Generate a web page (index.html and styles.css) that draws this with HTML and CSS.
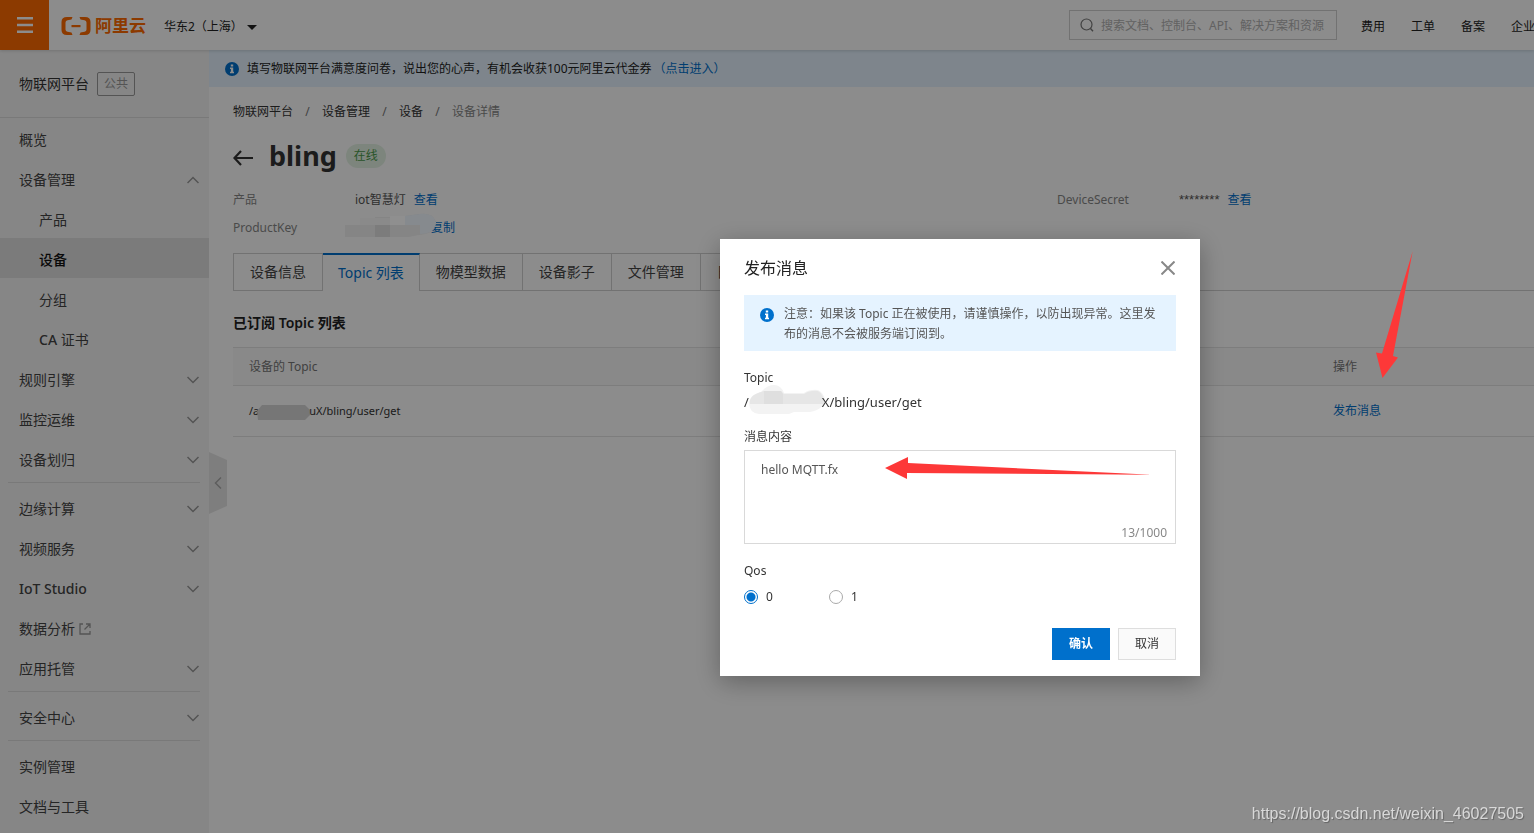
FILE: index.html
```html
<!DOCTYPE html>
<html lang="zh-CN">
<head>
<meta charset="utf-8">
<title>物联网平台 - 设备详情</title>
<link rel="stylesheet" href="styles.css">
</head>
<body>
<div class="app">
  <header class="topbar">
    <button class="menu-btn" aria-label="菜单"><svg width="16" height="16" viewBox="0 0 16 16"><path d="M0 0h16v2.500H0zM0 6.700h16v2.500H0zM0 13.500h16V16H0z" fill="#fff"/></svg></button>
    <a class="logo" href="#"><svg width="30" height="20" viewBox="0 0 30 20"><path d="M11.500 1H6Q.500 1 .500 6v8q0 5 5.500 5h5.500l-1-2.500-4-.8q-2-.4-2-2.200V6.500q0-1.800 2-2.200l4-.8zM18.500 1H24q5.500 0 5.500 5v8q0 5-5.500 5h-5.500l1-2.500 4-.8q2-.4 2-2.200V6.500q0-1.800-2-2.200l-4-.8z" fill="#ff6a00"/><path d="M10.500 9h9v2.200h-9z" fill="#ff6a00"/></svg><span>阿里云</span></a>
    <button class="region">华东2（上海）<i class="caret"></i></button>
    <label class="search"><svg width="14" height="14" viewBox="0 0 14 14"><circle cx="6.500" cy="6.500" r="5.500" fill="none" stroke="#777" stroke-width="1.200"/><path d="M10.500 10.500l2.500 2.800" stroke="#777" stroke-width="1.400"/></svg><input type="text" aria-label="搜索" placeholder="搜索文档、控制台、API、解决方案和资源"></label>
    <nav class="topnav"><a href="#">费用</a><a href="#">工单</a><a href="#">备案</a><a href="#">企业</a></nav>
  </header>
  <div class="body">
    <aside class="sidebar">
      <div class="side-head">物联网平台<span class="badge">公共</span></div>
      <nav class="side-nav">
        <a href="#">概览</a>
        <a href="#">设备管理<svg class="chev" viewBox="0 0 12 8"><path d="M.5 7L6 1.500 11.500 7"/></svg></a>
        <a href="#" class="sub">产品</a>
        <a href="#" class="sub active">设备</a>
        <a href="#" class="sub">分组</a>
        <a href="#" class="sub"><span><b>CA</b> 证书</span></a>
        <a href="#">规则引擎<svg class="chev" viewBox="0 0 12 8"><path d="M.5 1L6 6.500 11.500 1"/></svg></a>
        <a href="#">监控运维<svg class="chev" viewBox="0 0 12 8"><path d="M.5 1L6 6.500 11.500 1"/></svg></a>
        <a href="#">设备划归<svg class="chev" viewBox="0 0 12 8"><path d="M.5 1L6 6.500 11.500 1"/></svg></a>
        <hr>
        <a href="#">边缘计算<svg class="chev" viewBox="0 0 12 8"><path d="M.5 1L6 6.500 11.500 1"/></svg></a>
        <a href="#">视频服务<svg class="chev" viewBox="0 0 12 8"><path d="M.5 1L6 6.500 11.500 1"/></svg></a>
        <a href="#"><b>IoT Studio</b><svg class="chev" viewBox="0 0 12 8"><path d="M.5 1L6 6.500 11.500 1"/></svg></a>
        <a href="#">数据分析<svg class="ext" viewBox="0 0 12 12"><path d="M4 1H1v10h10V8M7 1h4v4M11 1L5.500 6.500"/></svg></a>
        <a href="#">应用托管<svg class="chev" viewBox="0 0 12 8"><path d="M.5 1L6 6.500 11.500 1"/></svg></a>
        <hr>
        <a href="#">安全中心<svg class="chev" viewBox="0 0 12 8"><path d="M.5 1L6 6.500 11.500 1"/></svg></a>
        <hr>
        <a href="#">实例管理</a>
        <a href="#">文档与工具</a>
      </nav>
      <button class="collapse" aria-label="收起"><svg width="8" height="12" viewBox="0 0 8 12"><path d="M7 .5L1.500 6 7 11.500" fill="none" stroke="#aaa" stroke-width="1.500"/></svg></button>
    </aside>
    <main class="main">
      <div class="banner"><svg class="info" viewBox="0 0 14 14"><circle cx="7" cy="7" r="7" fill="#0070cc"/><path d="M5.800 2.500h2.400v2H5.800zM5 5.500h3.200v4.300H9v1.400H5V9.800h.9V6.900H5z" fill="#fff"/></svg><span>填写物联网平台满意度问卷，说出您的心声，有机会收获100元阿里云代金券</span><a href="#">（点击进入）</a></div>
      <div class="content">
        <nav class="crumbs"><a href="#">物联网平台</a><i>/</i><a href="#">设备管理</a><i>/</i><a href="#">设备</a><i>/</i><span>设备详情</span></nav>
        <div class="title-row">
          <button class="back" aria-label="返回"><svg width="20" height="16" viewBox="0 0 20 16"><path d="M8 1L1.500 8 8 15M1.500 8H20" fill="none" stroke="#333" stroke-width="2.200"/></svg></button>
          <h1>bling</h1><span class="status">在线</span>
        </div>
        <dl class="props">
          <dt>产品</dt><dd>iot智慧灯<a href="#">查看</a></dd>
          <dt>DeviceSecret</dt><dd><span class="secret">********</span><a href="#">查看</a></dd>
          <dt>ProductKey</dt><dd class="key"><a href="#">复制</a></dd>
        </dl>
        <div class="tabs" role="tablist">
          <button role="tab">设备信息</button><button role="tab" class="on">Topic 列表</button><button role="tab">物模型数据</button><button role="tab">设备影子</button><button role="tab">文件管理</button><button role="tab">日志服务</button>
        </div>
        <h2>已订阅 Topic 列表</h2>
        <table class="topics">
          <thead><tr><th>设备的 Topic</th><th class="op">操作</th></tr></thead>
          <tbody><tr><td class="path">/a<svg class="mask-row" viewBox="0 0 54 15"><path d="M1 6L6 0h43l5 5v5l-5 5H2z" fill="#d8d8d8"/></svg>uX/bling/user/get</td><td><a href="#">发布消息</a></td></tr></tbody>
        </table>
      </div>
    </main>
  </div>
</div>
<div class="overlay">
  <svg class="mask-key" viewBox="0 0 92 26"><path d="M0 12h15V6h15V4h15V3h15L74 1q14-2 17 8-1 12-17 13l-10 2H0z" fill="#858585"/><path d="M15 5h30v7H15z" fill="#8a8a8a"/><path d="M45 3h15v9H45z" fill="#8f8f8f"/><path d="M30 12h15v12H30z" fill="#7c7c7c"/><path d="M60 3L74 1q14-2 17 8-1 12-16 12V12H60z" fill="#868a8e"/></svg>
  <form class="modal" role="dialog" aria-labelledby="dlg">
    <div class="modal-head"><h3 id="dlg">发布消息</h3><button type="button" class="close" aria-label="关闭"><svg width="14" height="14" viewBox="0 0 14 14"><path d="M.5 .5l13 13M13.500 .5l-13 13" stroke="#888" stroke-width="2"/></svg></button></div>
    <div class="notice"><svg class="info" viewBox="0 0 14 14"><circle cx="7" cy="7" r="7" fill="#0070cc"/><path d="M5.800 2.500h2.400v2H5.800zM5 5.500h3.200v4.300H9v1.400H5V9.800h.9V6.900H5z" fill="#fff"/></svg><p>注意：如果该 Topic 正在被使用，请谨慎操作，以防出现异常。这里发布的消息不会被服务端订阅到。</p></div>
    <div class="field-label">Topic</div>
    <div class="topic">/<svg class="mask-topic" viewBox="0 0 76 32"><path d="M0 19q2-8 12-10Q18 2 25 2t10 8l20 0q6-4 14-3 6 3 7 10-1 9-15 12l-16 0-5 2H10Q0 30 0 19z" fill="#f3f3f3"/><path d="M1 21V17q2-6 14-9h17l3 3h20q6-4 14-3 6 3 6 13z" fill="#e6e6e6"/><path d="M15 8h17l2 3v10H15z" fill="#dfdfdf"/></svg>X/bling/user/get</div>
    <label class="field-label msg-label" for="msg">消息内容</label>
    <div class="area"><textarea id="msg">hello MQTT.fx</textarea><span class="count">13/1000</span></div>
    <div class="field-label">Qos</div>
    <div class="radios"><label><input type="radio" name="qos" checked>0</label><label><input type="radio" name="qos">1</label></div>
    <div class="actions"><button type="button" class="btn primary">确认</button><button type="button" class="btn">取消</button></div>
    <svg class="arrow-msg" viewBox="0 0 267 22"><path d="M0 11L23 0V6L267 17.700 22 16V22z" fill="#fd3838"/></svg>
  </form>
  <svg class="arrow-op" viewBox="0 0 37 127"><path d="M36.700 0L17 105l5 1.500L6.500 127 0 101.500l6 1z" fill="#fd3838"/></svg>
  <div class="watermark">https://blog.csdn.net/weixin_46027505</div>
</div>
</body>
</html>
```
FILE: styles.css
```css
* { box-sizing: border-box; }
body { margin: 0; color: #333; background: #fff; font: 12px/20px "Noto Sans", "Noto Sans CJK SC", sans-serif; overflow: hidden; }
button, input, textarea { font: inherit; color: inherit; border: 0; background: none; padding: 0; margin: 0; }
a { color: #0070cc; text-decoration: none; }
i { font-style: normal; }
svg { display: block; flex: none; }
.app { min-height: 100vh; display: flex; flex-direction: column; }

.topbar { display: flex; align-items: center; height: 50px; box-shadow: 0 1px 3px rgba(0,0,0,.15); position: relative; z-index: 1; color: #222; }
.menu-btn { width: 49px; height: 50px; background: #ff6a00; display: grid; place-items: center; }
.logo { display: flex; align-items: center; gap: 4px; margin-left: 12px; padding-top: 2px; color: #ff6a00; font-size: 17px; font-weight: 700; }
.region { display: flex; align-items: center; gap: 4px; margin-left: 18px; padding-top: 4px; white-space: nowrap; }
.caret { border: 5px solid transparent; border-top-color: #222; border-bottom: 0; }
.search { display: flex; align-items: center; gap: 7px; width: 268px; height: 30px; margin-left: auto; padding: 0 10px; border: 1px solid #d0d0d0; }
.search input { flex: 1; min-width: 0; padding-top: 2px; }
.search input::placeholder { color: #b2b2b2; opacity: 1; }
.topnav { flex: 0 0 173px; margin-left: 24px; padding-top: 4px; display: flex; gap: 26px; overflow: hidden; white-space: nowrap; }
.topnav a { color: #222; flex: none; }

.body { display: flex; flex: 1; }
.sidebar { flex: 0 0 209px; background: #f5f5f5; position: relative; font-size: 14px; }
.side-head { display: flex; align-items: center; gap: 8px; height: 68px; padding-left: 19px; border-bottom: 1px solid #dcdcdc; }
.badge { border: 1px solid #999; border-radius: 2px; color: #999; font-size: 12px; line-height: 22px; padding: 0 6px; }
.side-nav a { display: flex; align-items: center; justify-content: space-between; height: 40px; padding: 4px 10px 0 19px; color: #444; }
.side-nav a.sub { padding-left: 39px; }
.side-nav a.active { background: #e0e0e0; font-weight: 500; color: #111; }
.side-nav b { font-weight: 500; }
.side-nav hr { margin: 4px 9px 4px 8px; border: 0; border-top: 1px solid #ddd; }
.chev { width: 12px; height: 8px; fill: none; stroke: #999; stroke-width: 1.500; }
.ext { width: 12px; height: 12px; margin-left: 4px; margin-right: auto; fill: none; stroke: #999; stroke-width: 1.300; }
.collapse { position: absolute; left: 209px; top: 402px; width: 18px; height: 62px; background: #e6e6e6; clip-path: polygon(0 0, 100% 13%, 100% 87%, 0 100%); display: grid; place-items: center; }

.main { flex: 1; min-width: 0; }
.banner { display: flex; align-items: center; height: 37px; padding-left: 16px; background: #e5f3ff; color: #222; }
.info { width: 14px; height: 14px; }
.banner .info { margin-right: 8px; }
.banner a { margin-left: 2px; }
.content { padding: 15px 0 0 24px; }
.crumbs { display: flex; }
.crumbs a { color: #333; }
.crumbs i { width: 29px; text-align: center; color: #777; }
.crumbs span { color: #888; }
.title-row { display: flex; align-items: center; height: 48px; margin-top: 10px; }
.back { padding-top: 4px; }
h1 { margin: 0 9px 0 16px; font-size: 27px; line-height: 40px; font-weight: 700; color: #333; }
.status { background: #e4f3e4; color: #4c9a4c; border-radius: 12px; line-height: 24px; padding: 0 8px; }
.props { display: grid; grid-template-columns: 122fr 702fr 122fr 355fr; row-gap: 8px; margin: 10px 0 15px; }
.props dt { color: #888; }
.props dd { margin: 0; color: #555; }
.props dd a { margin-left: 8px; }
.props .key a { margin-left: 76px; }
.secret { font-family: "Liberation Sans", sans-serif; font-size: 13px; }
.tabs { display: flex; height: 38px; background: linear-gradient(#d0d0d0, #d0d0d0) bottom / 100% 1px no-repeat; }
.tabs button { padding: 0 16px; border: 1px solid #d0d0d0; border-left: 0; font-size: 14px; color: #444; }
.tabs button:first-child { border-left: 1px solid #d0d0d0; }
.tabs button.on { padding: 0 15px; border-top: 2px solid #0070cc; border-bottom: 0; background: #fff; color: #0070cc; }
h2 { margin: 22px 0 14px; font-size: 14px; line-height: 20px; font-weight: 600; color: #222; }
.topics { width: 100%; border-collapse: collapse; table-layout: fixed; text-align: left; }
.topics th { height: 38px; padding: 0 16px; background: #f9f9f9; border: solid #e4e4e4; border-width: 1px 0; font-weight: 400; color: #777; }
.topics .op { width: 217px; }
.topics td { height: 51px; padding: 0 16px; border-bottom: 1px solid #e4e4e4; }
.topics .path { font-size: 11px; }
.mask-row { display: inline-block; width: 54px; height: 15px; margin: 0 -1px 0 -3px; vertical-align: -5px; }

.overlay { position: fixed; inset: 0; background: rgba(0,0,0,.45); z-index: 10; }
.modal { position: absolute; left: 720px; top: 239px; width: 480px; padding: 17px 24px 16px; background: #fff; box-shadow: 0 6px 24px rgba(0,0,0,.3); }
.modal-head { display: flex; justify-content: space-between; align-items: center; height: 24px; margin-bottom: 15px; }
.modal-head h3 { margin: 0; font-size: 16px; font-weight: 400; color: #222; }
.close { margin-right: 1px; }
.notice { display: flex; gap: 10px; padding: 9px 16px 7px; background: #e5f3ff; color: #555; }
.notice .info { margin-top: 4px; }
.notice p { margin: 0; }
.field-label { display: block; margin-top: 17px; }
.topic { font-size: 13px; line-height: 24px; margin-top: 2px; }
.mask-topic { display: inline-block; width: 76px; height: 32px; margin: -12px -3px -8px 0; vertical-align: 0; }
.msg-label { margin-top: 13px; }
.area { position: relative; margin-top: 3px; height: 94px; border: 1px solid #d9d9d9; }
.area textarea { display: block; width: 100%; height: 70px; padding: 9px 16px; resize: none; outline: 0; color: #555; }
.count { position: absolute; right: 8px; bottom: 0; color: #888; }
.radios { display: flex; gap: 56px; margin-top: 6px; }
.radios label { display: flex; align-items: center; gap: 8px; }
.radios input { appearance: none; width: 14px; height: 14px; border: 1px solid #aaa; border-radius: 50%; }
.radios input:checked { border-color: #0070cc; background: radial-gradient(circle, #0070cc 4px, #fff 5px); }
.actions { display: flex; justify-content: flex-end; gap: 8px; margin-top: 21px; }
.btn { width: 58px; height: 32px; border: 1px solid #dedede; background: #fafafa; }
.btn.primary { border-color: #0070cc; background: #0070cc; color: #fff; font-weight: 700; }
.mask-key { position: absolute; left: 345px; top: 213px; width: 92px; height: 26px; }
.arrow-msg { position: absolute; left: 165px; top: 218px; width: 267px; height: 22px; }
.arrow-op { position: absolute; left: 1376px; top: 251px; width: 37px; height: 127px; }
.watermark { position: absolute; right: 10px; bottom: 9px; color: #d8d8d8; font: 16px/20px "Liberation Sans", sans-serif; text-shadow: 1px 1px 1px rgba(0,0,0,.3); }
```
